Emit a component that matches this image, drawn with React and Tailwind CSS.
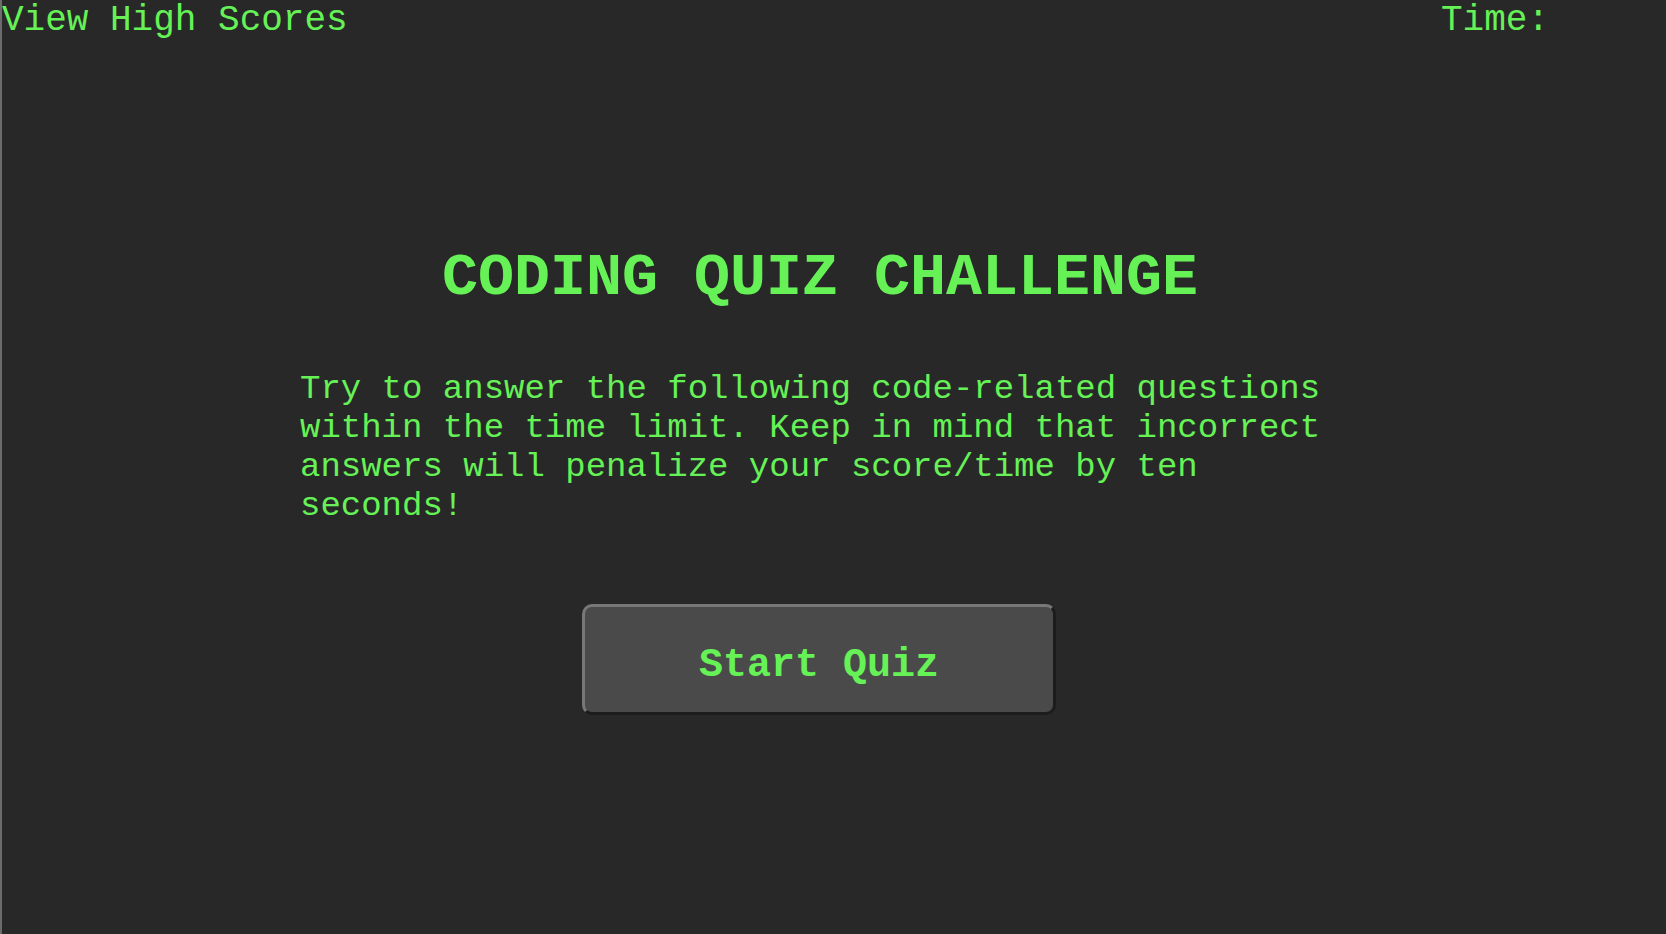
import { useState } from 'react';

const mono = "font-['Liberation_Mono','Courier_New',monospace]";

export default function App() {
    const [time] = useState('');

    return (
        <div className={`min-h-[934px] bg-[#282828] border-l-2 border-[#6b6b6b] text-[#66f257] ${mono}`}>
            <header className="flex justify-between items-start pr-[117px] text-[36px] leading-[41px]">
                <a href="#" className="cursor-pointer">View High Scores</a>
                <div>
                    Time: <span>{time}</span>
                </div>
            </header>

            <main className="ml-[298px] w-[1040px] flex flex-col pt-[203px]">
                <h1 className="text-center text-[60px] leading-[68px] font-bold">
                    CODING QUIZ CHALLENGE
                </h1>
                <p className="mt-[58px] text-[34px] leading-[39px]">
                    Try to answer the following code-related questions within the time limit. Keep in mind that incorrect answers will penalize your score/time by ten seconds!
                </p>
                <button
                    type="button"
                    className={`mt-[78px] ml-[282px] w-[474px] h-[111px] pt-[12px] rounded-[10px] bg-[#4a4a4a] border-[3px] border-t-[#787878] border-l-[#787878] border-b-[#1c1c1c] border-r-[#1c1c1c] text-[40px] font-bold text-[#66f257] ${mono}`}
                >
                    Start Quiz
                </button>
            </main>
        </div>
    );
}
